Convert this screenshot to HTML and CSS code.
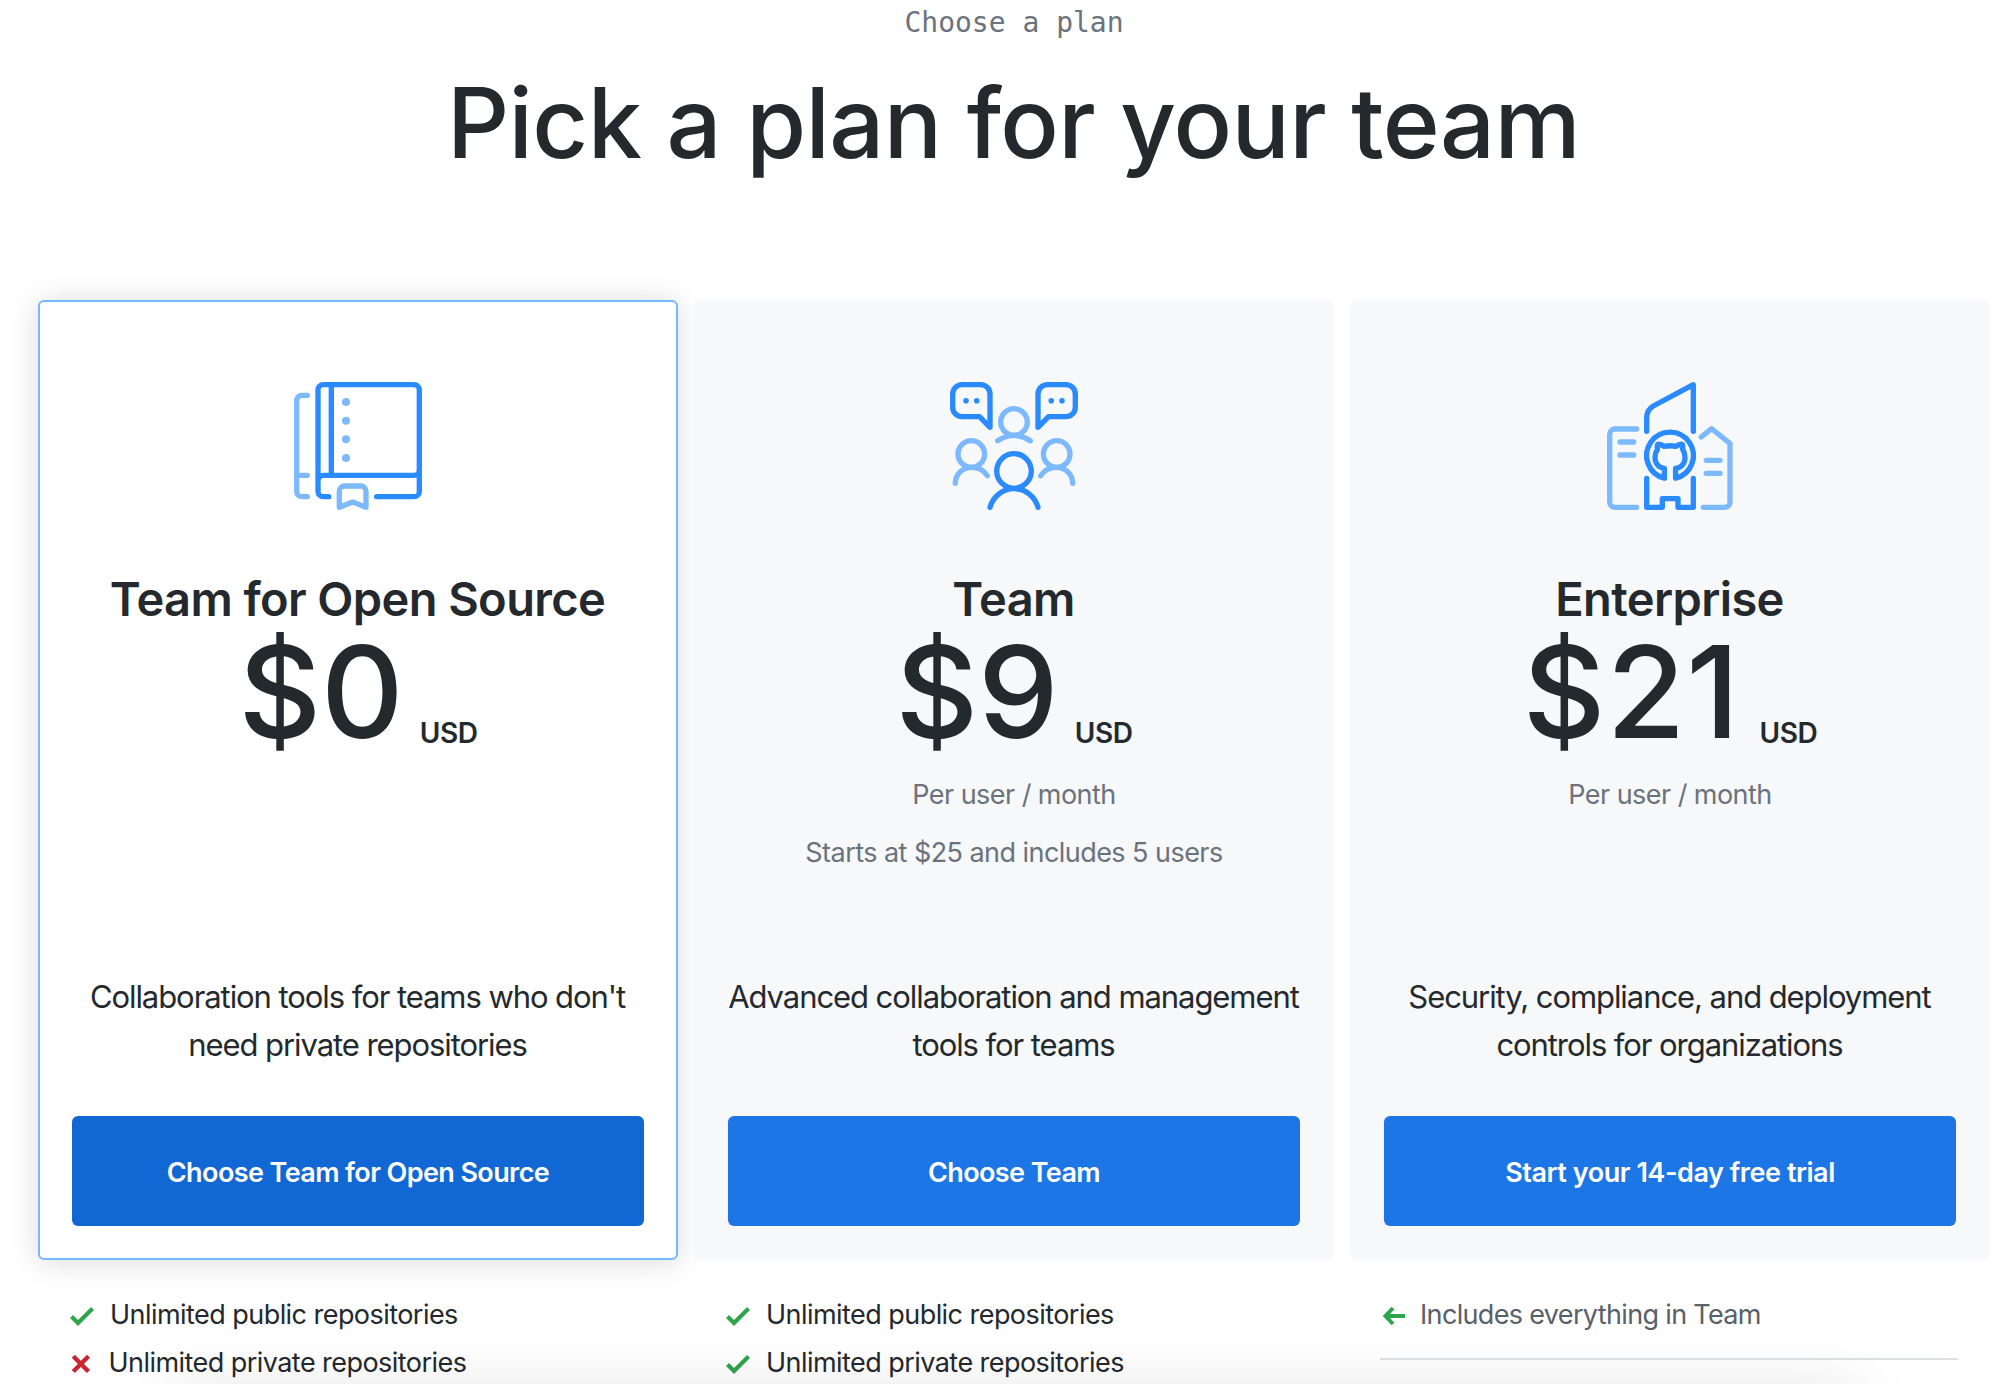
FILE: index.html
```html
<!DOCTYPE html>
<html lang="en">
<head>
<meta charset="utf-8">
<title>Pick a plan for your team</title>
<link rel="stylesheet" href="styles.css">
</head>
<body>
<header class="intro">
  <p class="eyebrow">Choose a plan</p>
  <h1 class="headline">Pick a plan for your team</h1>
</header>

<main class="plans">
  <section class="plan">
    <div class="card card-active">
      <svg class="plan-icon" viewBox="0 0 128 128">
        <g class="light">
          <path d="M13.3 13.3H8A5.3 5.3 0 0 0 2.7 18.6V109.4A5.3 5.3 0 0 0 8 114.7H13.3M2.7 93.3H13.3"/>
          <path d="M45.3 125.3V109.3A5.3 5.3 0 0 1 50.6 104H66.7A5.3 5.3 0 0 1 72 109.3V125.3L58.7 120Z"/>
        </g>
        <g class="light-dots"><circle cx="52" cy="20" r="4"/><circle cx="52" cy="38.7" r="4"/><circle cx="52" cy="57.3" r="4"/><circle cx="52" cy="76" r="4"/></g>
        <path class="dark" d="M34.7 114.7H29.3A5.3 5.3 0 0 1 24 109.4V8A5.3 5.3 0 0 1 29.3 2.7H120A5.3 5.3 0 0 1 125.3 8V109.4A5.3 5.3 0 0 1 120 114.7H82.7M37.3 2.7V93.3M24 98.6A5.3 5.3 0 0 1 29.3 93.3H120A5.3 5.3 0 0 0 125.3 88"/>
      </svg>
      <h2 class="name">Team for Open Source</h2>
      <div class="price"><span class="amount">$0</span><span class="currency">USD</span></div>
      <div class="billing"></div>
      <p class="summary">Collaboration tools for teams who don't<br>need private repositories</p>
      <a class="button button-active">Choose Team for Open Source</a>
    </div>
    <ul class="features">
      <li class="feature">
        <svg class="mark yes" viewBox="0 0 24 32"><path d="M24 10 8 26 0 18l3-3 5 5L21 7z"/></svg>
        <span>Unlimited public repositories</span>
      </li>
      <li class="feature feature-missing">
        <svg class="mark no" viewBox="0 0 24 32"><path d="M3.3 8.3 18.5 23.5M18.5 8.3 3.3 23.5"/></svg>
        <span>Unlimited private repositories</span>
      </li>
    </ul>
  </section>

  <section class="plan">
    <div class="card">
      <svg class="plan-icon" viewBox="0 0 128 128">
        <g class="light">
          <circle cx="64" cy="40" r="13.3"/><path d="M47.7 58.7Q64 48 80.3 58.7"/>
          <circle cx="21.3" cy="72" r="13.3"/><path d="M5.3 101.3C5.3 92 13 85.3 21.3 85.3C28 85.3 34 88 37.3 93.8"/>
          <circle cx="106.7" cy="72" r="13.3"/><path d="M122.7 101.3C122.7 92 115 85.3 106.7 85.3C100 85.3 94 88 90.7 93.8"/>
        </g>
        <g class="dark">
          <path d="M40 45.3 29.5 34.7H12A9.3 9.3 0 0 1 2.7 25.4V12A9.3 9.3 0 0 1 12 2.7H30.7A9.3 9.3 0 0 1 40 12Z"/>
          <path d="M88 45.3 98.5 34.7H116A9.3 9.3 0 0 0 125.3 25.4V12A9.3 9.3 0 0 0 116 2.7H97.3A9.3 9.3 0 0 0 88 12Z"/>
          <circle cx="64" cy="89" r="17.3"/><path d="M40 125.3C43 114 53 106.7 64 106.7S85 114 88 125.3"/>
        </g>
        <g class="dark-dots"><circle cx="16" cy="18.7" r="2.8"/><circle cx="26.7" cy="18.7" r="2.8"/><circle cx="101.3" cy="18.7" r="2.8"/><circle cx="112" cy="18.7" r="2.8"/></g>
      </svg>
      <h2 class="name">Team</h2>
      <div class="price"><span class="amount">$9</span><span class="currency">USD</span></div>
      <div class="billing"><p>Per user / month</p><p>Starts at $25 and includes 5 users</p></div>
      <p class="summary">Advanced collaboration and management<br>tools for teams</p>
      <a class="button">Choose Team</a>
    </div>
    <ul class="features">
      <li class="feature">
        <svg class="mark yes" viewBox="0 0 24 32"><path d="M24 10 8 26 0 18l3-3 5 5L21 7z"/></svg>
        <span>Unlimited public repositories</span>
      </li>
      <li class="feature">
        <svg class="mark yes" viewBox="0 0 24 32"><path d="M24 10 8 26 0 18l3-3 5 5L21 7z"/></svg>
        <span>Unlimited private repositories</span>
      </li>
    </ul>
  </section>

  <section class="plan">
    <div class="card">
      <svg class="plan-icon" viewBox="0 0 128 128">
        <path class="light" d="M30.7 47H9A5.3 5.3 0 0 0 3.7 52.3V120A5.3 5.3 0 0 0 9 125.3H30.7M14 60H27.7M14 73H27.7M95.3 55 105.7 46.7 124 61.5V120A5.3 5.3 0 0 1 118.7 125.3H97.3M100.3 78.3H114M100.3 91.3H114"/>
        <path class="dark" d="M40.7 49.3V36C40.7 30.5 43 26.5 47.3 24L87.3 2.7V49.3M40.7 96.5V125.3H56.3V116.7H72V125.3H87.3V96.5"/>
        <path class="dark" d="M58.4 96.2A23.4 23.4 0 1 1 69.6 96.2V86.5C75.6 85.5 79 81 79 75.5C79 71.5 77.8 69 76.5 67C77 65 77 63.5 76.3 62.3C74 62 71.8 62.8 69.8 64.3C66 63.6 62 63.6 58.2 64.3C56.2 62.8 54 62 51.7 62.3C51 63.5 51 65 51.5 67C50.2 69 49 71.5 49 75.5C49 81 52.4 85.5 58.4 86.5Z"/>
      </svg>
      <h2 class="name">Enterprise</h2>
      <div class="price"><span class="amount amount-wide">$21</span><span class="currency">USD</span></div>
      <div class="billing"><p>Per user / month</p></div>
      <p class="summary">Security, compliance, and deployment<br>controls for organizations</p>
      <a class="button button-trial">Start your 14-day free trial</a>
    </div>
    <ul class="features">
      <li class="feature feature-inherit">
        <svg class="mark back" viewBox="0 0 24 32"><path d="M12 8 4.5 16 12 24M5 16H24"/></svg>
        <span>Includes everything in Team</span>
      </li>
      <li class="divider"></li>
    </ul>
  </section>
</main>
<div class="dock-shadow"></div>
</body>
</html>
```

FILE: styles.css
```css
* { box-sizing: border-box; }

body {
  margin: 0;
  padding: 0 20px 0 38px;
  height: 1384px;
  overflow: hidden;
  background: #fff;
  color: #24292e;
  font-family: Inter, "Liberation Sans", sans-serif;
}

h1, h2, p, ul { margin: 0; padding: 0; }

.intro { text-align: center; }

.eyebrow {
  padding-top: 1px;
  font: 28px/44px "DejaVu Sans Mono", monospace;
  color: #6a737d;
}

.headline {
  margin-top: 20px;
  padding-right: 1px;
  font-size: 97px;
  font-weight: 500;
  line-height: 116px;
  letter-spacing: -0.64px;
}

.plans {
  display: grid;
  grid-template-columns: repeat(3, 1fr);
  gap: 16px;
  margin-top: 119px;
}

.card {
  display: flex;
  flex-direction: column;
  height: 960px;
  padding: 80px 32px 32px;
  border: 2px solid transparent;
  border-radius: 6px;
  background: #f6f8fa border-box;
  text-align: center;
}

.card-active {
  background: #fff;
  border-color: #79b8ff;
  box-shadow: 0 2px 30px rgba(0, 0, 0, 0.15);
}

.plan { position: relative; }

.plan-icon {
  align-self: center;
  width: 128px;
  height: 128px;
  overflow: visible;
}

.dark, .light {
  fill: none;
  stroke-width: 5.33;
  stroke-linecap: round;
  stroke-linejoin: round;
}
.dark { stroke: #298bff; }
.light { stroke: #7db9ff; }
.dark-dots { fill: #298bff; }
.light-dots { fill: #7db9ff; }

.name {
  margin-top: 61px;
  padding-right: 1px;
  font-size: 47px;
  font-weight: 600;
  line-height: 56px;
  letter-spacing: -0.6px;
}

.price {
  display: flex;
  justify-content: center;
  gap: 16px;
  padding-top: 1px;
}

.amount {
  font-size: 128px;
  font-weight: 500;
  line-height: 128px;
}
.amount-wide {
  margin-right: 3px;
  letter-spacing: 1px;
}

.currency {
  margin-top: 85px;
  font-size: 28px;
  font-weight: 600;
  line-height: 40px;
  letter-spacing: -0.4px;
}

.billing {
  display: flex;
  flex-direction: column;
  gap: 16px;
  height: 217px;
  padding-top: 18px;
  font-size: 27px;
  line-height: 42px;
  letter-spacing: -0.55px;
  color: #6a737d;
}

.summary {
  padding-right: 1px;
  font-size: 31px;
  line-height: 48px;
  letter-spacing: -1.07px;
  white-space: nowrap;
}

.button {
  display: flex;
  align-items: center;
  justify-content: center;
  height: 110px;
  margin-top: 47px;
  padding-top: 2px;
  border-radius: 6px;
  background: #1d76e5;
  color: #fff;
  font-size: 27px;
  font-weight: 600;
  letter-spacing: -0.6px;
}
.button-active { background: #1168d4; }
.button-trial { letter-spacing: -0.45px; }

.features {
  padding: 31px 32px 0 32px;
  list-style: none;
  font-size: 27px;
  line-height: 48px;
  letter-spacing: -0.55px;
}

.feature {
  display: flex;
  gap: 16px;
}
.feature-missing { gap: 14.5px; }
.feature-inherit {
  gap: 15px;
  margin-left: -1px;
  letter-spacing: -0.66px;
  color: #586069;
}

.mark {
  width: 24px;
  height: 32px;
  margin-top: 9px;
}
.yes { fill: #2ea44b; }
.no { fill: none; stroke: #cb2431; stroke-width: 4.4; }
.back { fill: none; stroke: #2ea44b; stroke-width: 4; }

.divider {
  height: 2px;
  margin: 19px 0 0 -2px;
  background: #dfe2e5;
}

.dock-shadow {
  position: absolute;
  top: 1388px;
  left: 170px;
  right: 150px;
  height: 60px;
  box-shadow: 0 0 64px rgba(0, 0, 0, 0.1);
}
```
